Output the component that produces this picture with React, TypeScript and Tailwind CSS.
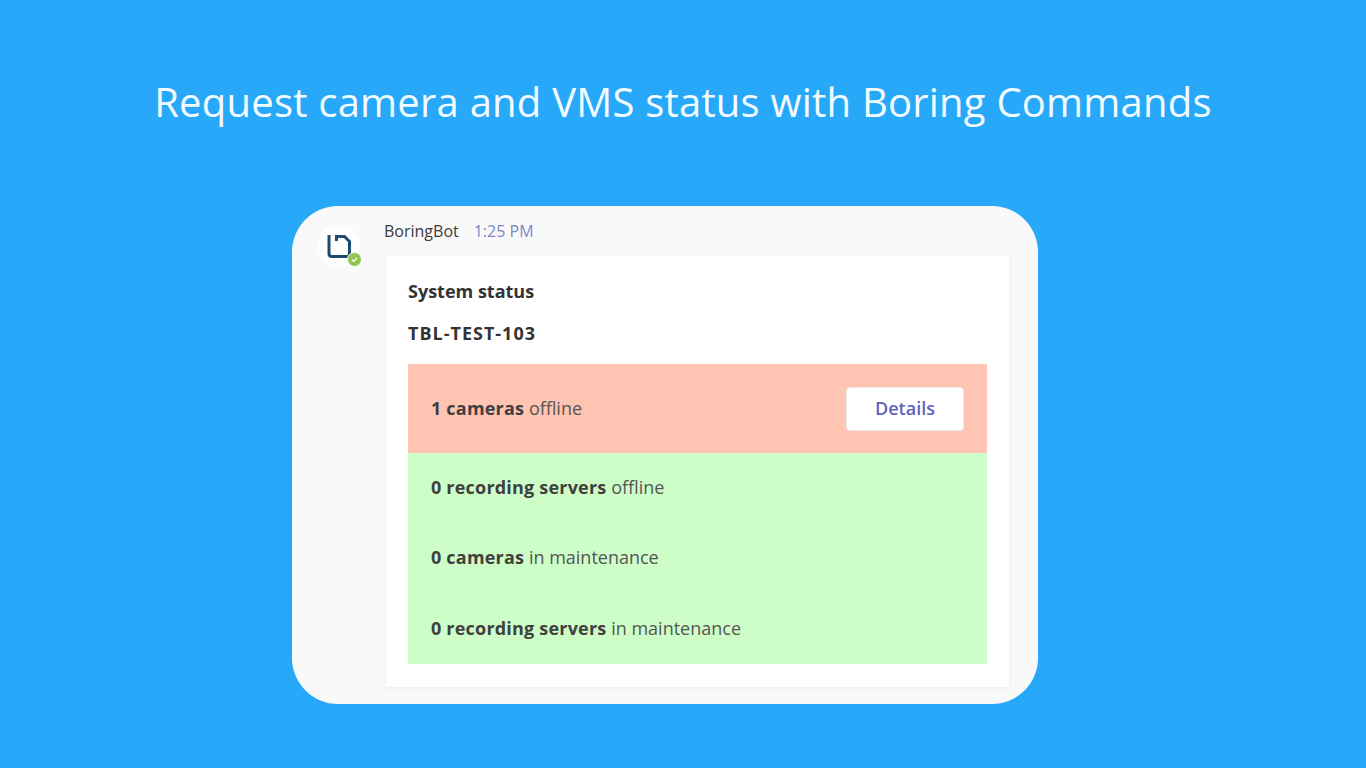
const font = { fontFamily: '"Open Sans", "Noto Sans", sans-serif' };

const BoringLogo = () => (
  <div className="relative w-[42px] h-[42px] mt-[5px] bg-white rounded-full flex items-center justify-center">
    <svg width="24" height="23" viewBox="0 0 24 23" fill="none">
      <path
        d="M2 0 V18.500 Q2 21.500 5 21.500 H20 Q22.500 21.500 22.500 19 V6.500 L17.500 1.500 H9.500 V6"
        stroke="#1f4a70"
        strokeWidth="3"
      />
    </svg>
    <div className="absolute right-[-2px] bottom-[0px] w-[15px] h-[15px] rounded-full bg-[#92c353] border border-white flex items-center justify-center">
      <svg width="9" height="9" viewBox="0 0 10 10" fill="none">
        <path d="M2 5.200 L4.200 7.200 L8 3" stroke="white" strokeWidth="1.400" />
      </svg>
    </div>
  </div>
);

const Row = ({ bold, rest, className }: { bold: string; rest: string; className: string }) => (
  <div className={`pl-[23px] text-[18px] leading-[24px] text-[#555555] ${className}`}>
    <b className="font-bold tracking-[0.2px] text-[#404040]">{bold}</b> {rest}
  </div>
);

export default function App() {
  return (
    <div style={font} className="w-[1366px] h-[768px] overflow-hidden bg-[#28a8f8] flex flex-col">
      <h1 className="mt-[74px] h-[56px] text-[40px] leading-[55px] font-normal text-[#f2fbff] whitespace-nowrap text-center tracking-[0.22px]">
        Request camera and VMS status with Boring Commands
      </h1>
      <div className="mt-[76px] ml-[292px] w-[746px] h-[498px] bg-[#f9f9f9] rounded-[46px] flex pl-[26px] pt-[14px]">
        <div className="w-[68px] shrink-0">
          <BoringLogo />
        </div>
        <div className="flex flex-col">
          <div className="flex items-center h-[24px] -mt-[1px] text-[16px] text-[#3c3c3c] -ml-[2px] gap-[15px]">
            <span>BoringBot</span>
            <span className="text-[#7f85c9]">1:25 PM</span>
          </div>
          <div className="mt-[13px] w-[623px] h-[431px] bg-white shadow-[0_1px_4px_rgba(0,0,0,0.05)] px-[22px] pt-[22px] text-[#333333]">
            <div className="text-[18px] leading-[26px] font-bold">System status</div>
            <div className="mt-[16px] text-[18px] leading-[26px] font-bold tracking-[1px]">TBL-TEST-103</div>
            <div className="mt-[18px] h-[89px] bg-[#ffc4b2] flex items-center justify-between pr-[23px]">
              <Row bold="1 cameras" rest="offline" className="-mt-[1px]" />
              <button className="w-[118px] h-[44px] bg-white rounded-[4px] border border-[#e8e8ee] text-[18px] font-semibold text-[#5f62bd]">
                Details
              </button>
            </div>
            <div className="h-[211px] bg-[#cdfec7] flex flex-col pt-[22px]">
              <Row bold="0 recording servers" rest="offline" className="" />
              <Row bold="0 cameras" rest="in maintenance" className="mt-[46px]" />
              <Row bold="0 recording servers" rest="in maintenance" className="mt-[47px]" />
            </div>
          </div>
        </div>
      </div>
    </div>
  );
}
